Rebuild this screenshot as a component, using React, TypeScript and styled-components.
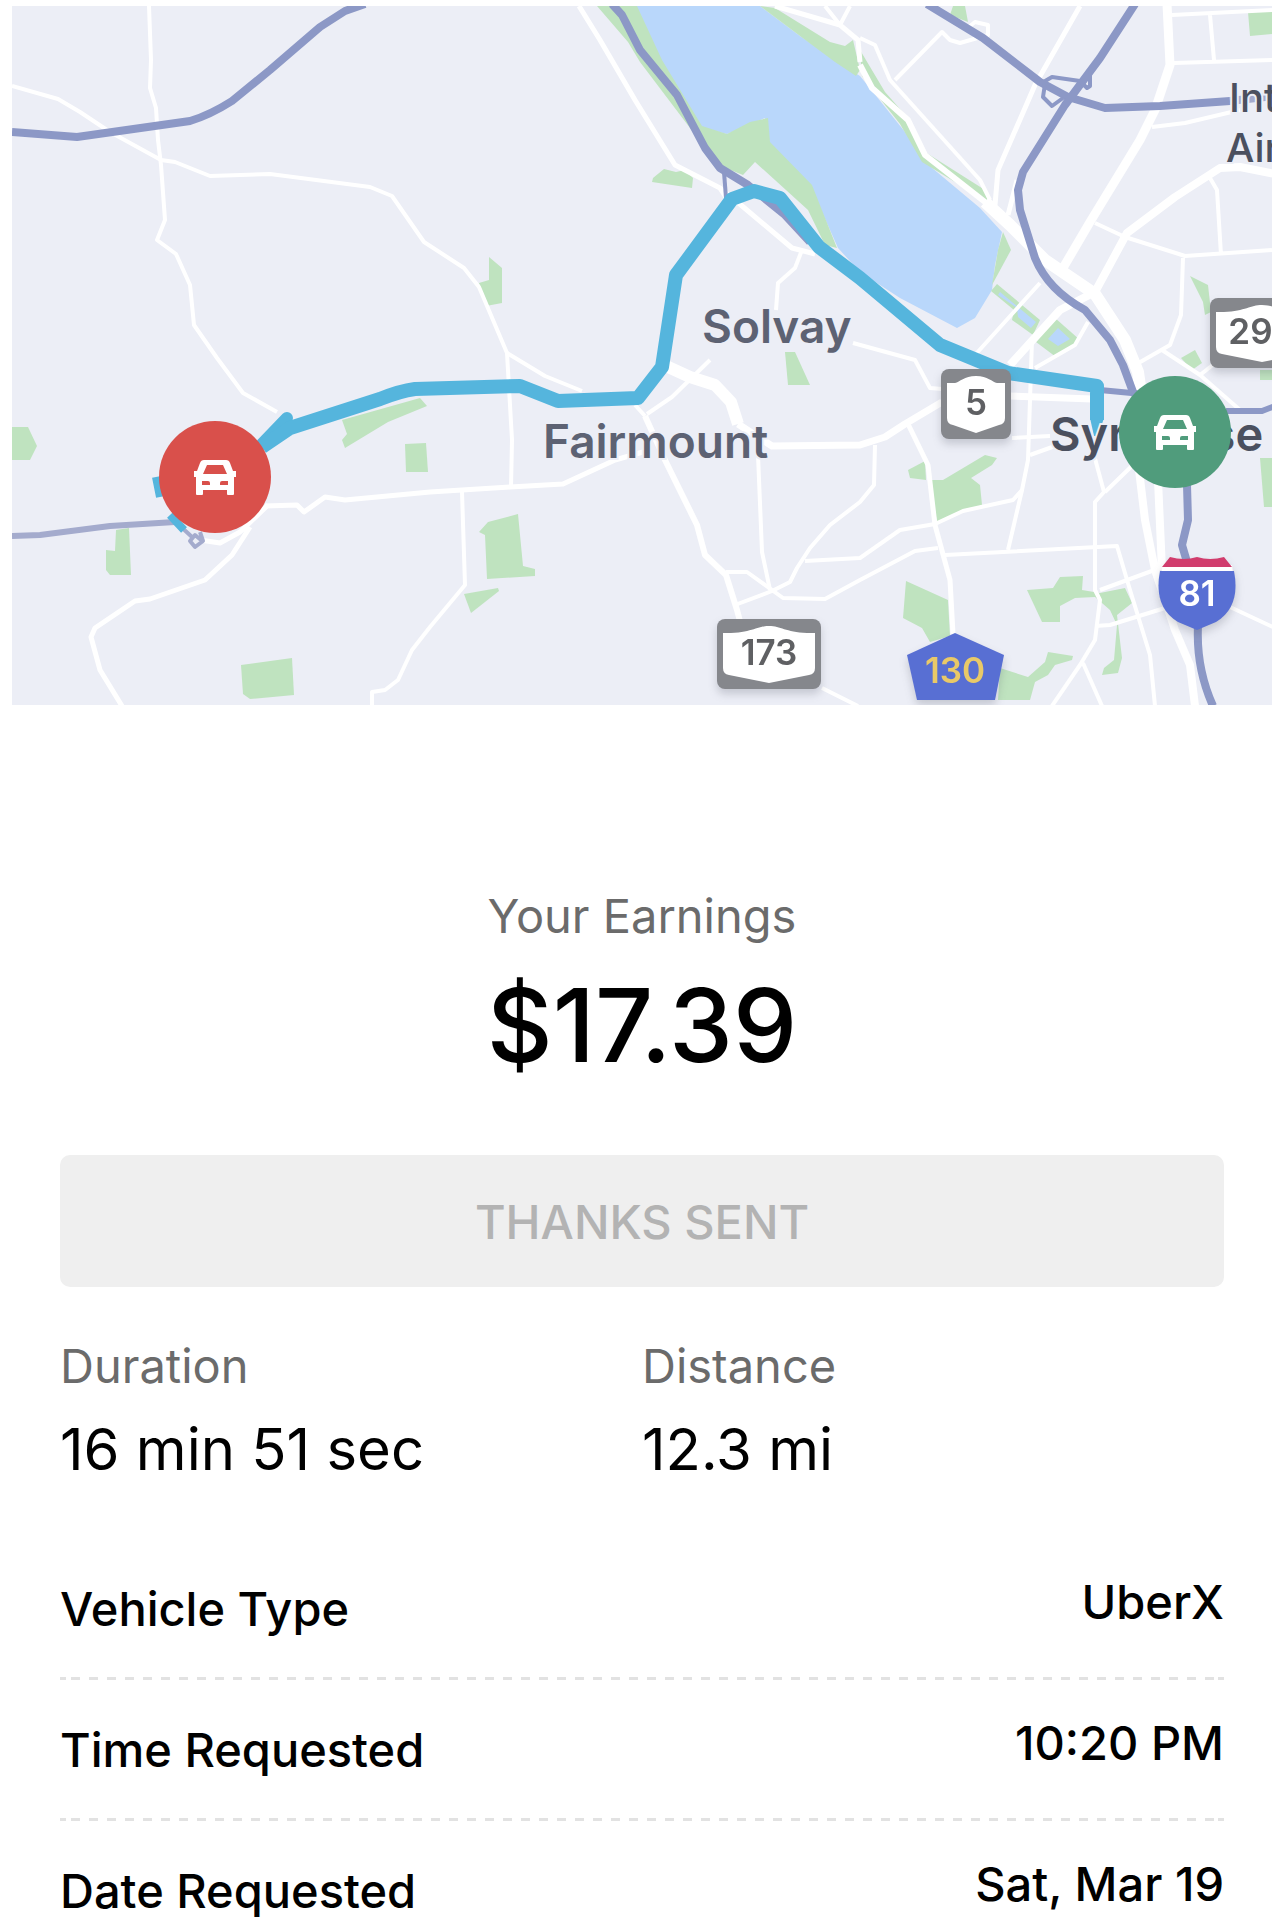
import React from "react";
import styled, { createGlobalStyle } from "styled-components";

const GlobalStyle = createGlobalStyle`
  * { box-sizing: border-box; }
  body {
    margin: 0;
    background: #fff;
    color: #000;
    font-family: Inter, "Liberation Sans", sans-serif;
  }
`;

const Page = styled.main`
  width: 100%;
  padding-top: 6px;
`;

const MapFrame = styled.figure`
  margin: 0 12px;
`;

const MapDrawing = styled.svg`
  display: block;
  width: 100%;
  height: auto;
  background: #eceef6;
`;

const Parks = styled.g`
  fill: #bfe3bf;
`;

const Lake = styled.path`
  fill: #b9d7fb;
`;

const Road = styled.path<{ $w?: number }>`
  fill: none;
  stroke: #fff;
  stroke-width: ${({ $w = 4 }) => $w};
  stroke-linejoin: round;
`;

const Highway = styled.path<{ $w?: number; $pale?: boolean }>`
  fill: none;
  stroke: ${({ $pale }) => ($pale ? "#a4abcd" : "#8c98c6")};
  stroke-width: ${({ $w = 8 }) => $w};
  stroke-linejoin: round;
`;

const Route = styled.path<{ $w?: number }>`
  fill: none;
  stroke: #55b5dd;
  stroke-width: ${({ $w = 14 }) => $w};
  stroke-linejoin: round;
`;

const PlaceName = styled.text<{ $size?: number; $dark?: boolean }>`
  font-size: ${({ $size = 46 }) => $size}px;
  font-weight: ${({ $size = 46 }) => ($size < 46 ? 500 : 600)};
  fill: ${({ $dark }) => ($dark ? "#4b505f" : "#5d6273")};
  stroke: #eceef6;
  stroke-width: 4;
  paint-order: stroke;
`;

const ShieldGroup = styled.g`
  filter: drop-shadow(0 5px 4px rgba(60, 64, 80, 0.22));
`;

const ShieldNumber = styled.text<{ $color?: string }>`
  font-size: 35px;
  font-weight: 600;
  text-anchor: middle;
  fill: ${({ $color = "#5f6063" }) => $color};
`;

const Details = styled.section`
  padding: 181px 60px 0;
`;

const Earnings = styled.div`
  display: flex;
  flex-direction: column;
  align-items: center;
  gap: 19px;
`;

const Caption = styled.div`
  font-size: 47px;
  line-height: 60px;
  font-weight: 400;
  color: #6b6b6b;
`;

const Amount = styled.div`
  font-size: 102px;
  line-height: 120px;
  font-weight: 500;
`;

const ThanksButton = styled.button`
  display: block;
  width: 100%;
  height: 132px;
  margin-top: 70px;
  padding: 0;
  border: 0;
  border-radius: 10px;
  background: #efefef;
  color: #b3b3b3;
  font-family: inherit;
  font-size: 47px;
  font-weight: 500;
`;

const Stats = styled.div`
  display: grid;
  grid-template-columns: 1fr 1fr;
  margin-top: 49px;
`;

const Stat = styled.div`
  display: flex;
  flex-direction: column;
  gap: 13px;
`;

const StatValue = styled.div`
  font-size: 58px;
  line-height: 80px;
  font-weight: 400;
`;

const Facts = styled.dl`
  margin: 50px 0 0;
`;

const Fact = styled.div`
  display: flex;
  justify-content: space-between;
  align-items: flex-start;
  padding: 35px 0 36px;
  font-size: 47px;
  font-weight: 500;

  &:not(:last-child) {
    background:
      linear-gradient(#e2e2e2, #e2e2e2) left bottom / 6px 3px no-repeat,
      linear-gradient(#e2e2e2, #e2e2e2) right bottom / 6px 3px no-repeat,
      linear-gradient(90deg, #e2e2e2 9px, transparent 9px) 11px 100% / 18px 3px repeat-x;
  }

  &:last-child {
    padding-bottom: 0;
  }
`;

const FactName = styled.dt`
  line-height: 70px;
`;

const FactValue = styled.dd`
  margin: 0;
  line-height: 56px;
`;

function RouteShield({ cx, top, width, label }: { cx: number; top: number; width: number; label: string }) {
  const l = cx - width / 2;
  const i = l + 6;
  const r = l + width - 6;
  return (
    <ShieldGroup>
      <rect x={l} y={top} width={width} height={70} rx={8} fill="#85878c" />
      <path
        fill="#fff"
        d={`M${i} ${top + 14} H${i + 8} C${cx - 16} ${top + 13} ${cx - 12} ${top + 7} ${cx} ${top + 7} C${cx + 12} ${top + 7} ${cx + 16} ${top + 13} ${r - 8} ${top + 14} H${r} V${top + 49} Q${r} ${top + 55} ${r - 6} ${top + 56} L${cx} ${top + 64} L${i + 6} ${top + 56} Q${i} ${top + 55} ${i} ${top + 49} Z`}
      />
      <ShieldNumber x={cx} y={top + 46}>{label}</ShieldNumber>
    </ShieldGroup>
  );
}

function CarPin({ x, y, color }: { x: number; y: number; color: string }) {
  return (
    <g transform={`translate(${x} ${y})`}>
      <circle r={56} fill={color} />
      <path
        fill="#fff"
        fillRule="evenodd"
        d="M-11 -17 H11 Q14 -17 15 -14 L18 -6 H21 V0 H19 V17 Q19 18 18 18 H13 Q12 18 12 17 V13 H-12 V17 Q-12 18 -13 18 H-18 Q-19 18 -19 17 V0 H-21 V-6 H-18 L-15 -14 Q-14 -17 -11 -17 Z M-8 -12 L-12 -3 H12 L8 -12 Z M-13 4 V8 H-5 V6 Q-5 4 -7 4 Z M13 4 V8 H5 V6 Q5 4 7 4 Z"
      />
    </g>
  );
}

const parks = [
  "M597 6 H637 L662 60 L702 126 L727 134 L750 122 L768 118 L770 142 L812 185 L837 248 L825 245 L808 210 L755 162 L743 175 L718 165 L640 62 L628 42 Z",
  "M760 6 L775 8 L830 42 L845 46 L853 40 L860 70 L856 76 L835 62 L800 36 Z",
  "M860 50 L885 92 L908 118 L925 152 L985 190 L988 202 L922 162 L900 124 L862 76 Z",
  "M953 6 H965 L968 22 L950 15 Z",
  "M1248 12 H1272 V34 L1250 36 Z",
  "M1003 232 L1011 250 L992 285 L998 250 Z",
  "M991 291 L997 284 L1040 320 L1033 335 L1012 320 L1014 310 Z",
  "M1055 318 L1080 340 L1056 357 L1036 342 Z",
  "M1190 276 L1208 285 L1211 312 L1205 315 L1203 302 Z",
  "M1181 358 L1195 350 L1202 363 L1192 370 Z",
  "M1260 370 H1272 V380 H1260 Z",
  "M1260 458 H1272 V507 H1264 Z",
  "M12 427 H28 L37 446 L30 460 H12 Z",
  "M342 420 L420 398 L427 406 L388 422 L345 448 L342 440 L347 434 Z",
  "M405 444 L426 443 L428 472 H406 Z",
  "M106 550 L115 551 L116 530 L129 528 L131 575 H110 L106 570 Z",
  "M241 665 L292 658 L294 695 L250 699 L243 694 Z",
  "M479 532 L488 522 L518 514 L523 566 L535 569 V576 L487 579 L485 535 Z",
  "M464 594 L498 588 L499 591 L471 613 Z",
  "M489 257 L502 268 V303 L486 306 L479 283 L489 280 Z",
  "M653 178 L664 169 L676 172 L685 170 L693 178 L692 188 L652 182 Z",
  "M785 352 H795 L810 385 H788 Z",
  "M908 470 L925 461 L926 480 L910 478 Z",
  "M930 480 L943 480 L985 455 L997 458 L992 465 L971 478 L980 485 L982 505 L937 522 Z",
  "M906 581 L948 600 L950 636 L930 642 L922 628 L903 618 Z",
  "M1027 590 L1053 588 L1060 577 L1083 576 L1082 590 L1100 593 L1125 588 L1132 603 L1117 615 L1122 658 L1118 673 L1102 675 L1104 668 L1114 660 L1117 625 L1110 610 L1095 597 L1075 598 L1060 606 V622 H1042 Z",
  "M1000 668 L1028 677 L1045 662 L1048 652 L1073 656 L1072 660 L1055 665 L1048 675 L1035 682 L1030 700 H998 Z",
];

const thinRoads = [
  "M149 6 L151 60 L150 88 L156 108 L158 140 L161 165 L165 220 L157 240 L176 254 L190 285 L194 325 L217 358 L243 393 L277 412",
  "M12 86 L58 99 L80 112 L110 132 L161 160 L175 162 L210 176 L270 174 L370 187 L392 196 L424 242 L464 268 L479 287 L507 353 L512 440 L511 487",
  "M507 353 L545 376 L582 391",
  "M802 250 L795 268 L778 283 L776 310",
  "M853 343 L915 360 L930 388 L942 389",
  "M635 405 L645 416 M647 414 L672 397 L710 360",
  "M758 455 L762 552 L770 590",
  "M726 572 H747 L783 598 L825 599 L860 580 L915 551 L938 548",
  "M735 605 L772 591 L790 582 L797 568 L810 548 L830 525 L860 502 L874 485 L875 445",
  "M805 561 L860 558 L900 530 L935 524",
  "M462 492 L465 585 L430 627 L412 650 L398 680 L385 690 L372 692 V705",
  "M822 688 L858 706",
  "M935 524 L963 511 L1013 500 L1022 490 L1028 460 L1032 340",
  "M1008 550 L1022 490",
  "M945 555 L1117 546 L1130 590 L1150 655 L1155 706",
  "M1090 440 L1104 492 L1095 502 V590 L1100 600 L1095 640 L1080 665 L1052 706 M1083 663 L1102 706",
  "M1100 590 L1160 568 M1095 626 L1110 625 L1165 608 M1230 607 L1275 628",
  "M1105 492 L1135 463 M1012 438 L1050 436 M1030 455 L1055 446",
  "M860 38 L875 45 L890 80 L980 180 L990 200",
  "M895 80 L942 32 L950 40 L960 43 L988 35 L988 25 L975 22 L965 30",
  "M1172 15 L1272 10 M1210 15 L1214 60 M1174 63 L1272 60",
  "M1152 127 L1185 123 L1240 110",
  "M1210 178 L1217 190 L1221 255 M1095 223 L1125 237 L1185 256 L1272 250",
  "M1183 258 L1181 315 L1170 345 L1135 365 M1162 350 L1200 375 L1214 364 M1200 375 L1240 410",
  "M1040 283 L975 355 M1088 322 L1075 345 L1035 368",
  "M825 6 L840 25 L850 6",
];

const facts: [string, string][] = [
  ["Vehicle Type", "UberX"],
  ["Time Requested", "10:20 PM"],
  ["Date Requested", "Sat, Mar 19"],
];

function TripMap() {
  return (
    <MapFrame>
      <MapDrawing viewBox="12 6 1260 699" role="img" aria-label="Trip route from Syracuse past Solvay and Fairmount">
        <Lake d="M633 6 L655 58 L675 88 L702 128 L727 134 L765 118 L770 145 L810 185 L838 248 L860 272 L900 298 L957 328 L975 318 L992 290 L995 265 L1002 232 L980 208 L925 162 L905 132 L873 92 L860 76 L835 60 L800 36 L760 6 Z" />
        <Parks>{parks.map((d) => <path key={d} d={d} />)}</Parks>
        <Lake d="M1000 292 L1036 322 L1031 328 L1018 317 L1017 308 L998 295 Z M1058 328 L1070 339 L1058 346 L1048 339 Z" />

        {thinRoads.map((d) => <Road key={d} d={d} />)}
        <Road $w={5} d="M579 6 L600 40 L635 100 L675 165 L720 188 L735 200 L792 248 L815 254 M720 188 L728 200" />
        <Road $w={5} d="M265 506 L297 505 L304 512 L325 497 L345 500 L430 492 L510 487 L563 484 L615 460 L650 450" />
        <Road $w={5} d="M200 540 L220 543 L240 532 L268 505 M250 527 L232 555 L205 580 L150 599 L135 601 L95 628 L91 637 L100 670 L122 706" />
        <Road $w={6} d="M645 416 L665 460 L697 525 L705 555 L726 575 L737 610 L745 640" />
        <Road $w={12} d="M666 366 L690 377 L715 385 L731 402 L738 424" />
        <Road $w={7} d="M738 424 L772 446 L860 445 L885 437 L905 424 L942 402 M1010 396 L1092 399" />
        <Road $w={5} d="M908 424 L928 465 L935 525 L950 580 L953 634" />
        <Road $w={8} d="M1139 470 L1145 520 L1155 570 L1175 630 L1190 665 L1195 706 M1158 480 L1162 570" />
        <Road $w={5} d="M775 6 L840 25 L858 40 L860 62" />
        <Road $w={6} d="M860 65 L872 88 L908 120 L925 155 L985 202 L1010 225" />
        <Road $w={5} d="M1080 6 L1035 85 L998 170 L995 205 M1017 180 L1008 215" />
        <Road $w={9} d="M1167 4 L1170 65 L1155 110 L1140 140 L1090 222 L1063 268" />
        <Road $w={8} d="M1275 174 L1240 167 L1220 168 L1175 197 L1127 233 L1095 292 L1060 310 L1010 365" />
        <Road $w={12} d="M985 202 L1010 225 L1045 260 L1095 294 L1125 340 L1138 372 L1142 400" />

        <Highway d="M12 132 L77 137 L190 121 Q210 115 232 101 L270 70 L320 27 L345 11 L365 4" />
        <Highway d="M612 4 L622 15 L640 50 L677 95 L705 148 L720 168 L748 185 L785 215 L810 242" />
        <Highway $w={4} d="M724 172 L726 198" />
        <Highway d="M927 4 L983 38 L1040 82 L1068 97 L1105 108 L1160 106 L1230 101" />
        <Highway $pale d="M1230 101 L1275 96" />
        <Highway d="M1135 4 L1100 58 L1065 105 L1023 172 L1018 190 L1020 210 L1035 258 Q1048 290 1085 310 L1110 340 L1123 365 L1133 392 L1142 402" />
        <Highway $w={4} d="M1040 84 L1052 77 L1080 81 L1087 88 L1090 86 L1090 73 M1045 84 L1043 97 L1052 106 L1063 98" />
        <Highway $w={6} d="M1100 390 L1142 394" />
        <Highway $w={6} d="M1226 411 H1262 L1275 406" />
        <Highway d="M1187 485 L1188 520 L1182 545 L1187 562 M1198 626 Q1196 668 1213 706" />
        <Highway $pale $w={6} d="M12 536 L40 535 L110 526 L175 522" />
        <Highway $pale $w={4} d="M178 524 L192 537 M200 532 L203 541 L195 547 L190 541 L195 535 L201 540" />

        <Route $w={12} d="M262 444 L287 418" strokeLinecap="round" />
        <Route d="M262 447 L290 428 L380 399 Q400 391 415 389 L520 386 L558 401 L638 398 L662 367 L676 275 L732 199 L754 191 L780 198 L819 247 L860 278 L940 345 L1008 373 L1097 386 L1097 420" />
        <path fill="#55b5dd" d="M1090 418 H1104 L1098 436 H1094 Z" />
        <Route $w={8} d="M156 477 L160 497 M170 515 L184 530" />

        <PlaceName x={702} y={343}>Solvay</PlaceName>
        <PlaceName x={543} y={458}>Fairmount</PlaceName>
        <PlaceName x={1050} y={451} $size={47} $dark>Syracuse</PlaceName>
        <PlaceName x={1229} y={112} $size={40} $dark>Int</PlaceName>
        <PlaceName x={1226} y={162} $size={40} $dark>Air</PlaceName>

        <RouteShield cx={976} top={369} width={70} label="5" />
        <RouteShield cx={769} top={619} width={104} label="173" />
        <RouteShield cx={1262} top={298} width={104} label="290" />
        <ShieldGroup>
          <path fill="#586fd3" d="M955 633 L1004 655 L995 700 H917 L907 655 Z" />
          <ShieldNumber x={955} y={683} $color="#e9c968">130</ShieldNumber>
        </ShieldGroup>
        <ShieldGroup>
          <path fill="#fff" d="M1163 565 H1232 L1233 573 H1161 Z" />
          <path fill="#d13c6d" d="M1162 567 L1170 557 Q1184 561 1197 557 Q1210 561 1224 557 L1232 567 Z" />
          <path fill="#586fd3" d="M1160 571 H1234 Q1241 607 1216 622 L1197 630 L1178 622 Q1153 607 1160 571 Z" />
          <ShieldNumber x={1197} y={606} $color="#fff">81</ShieldNumber>
        </ShieldGroup>

        <CarPin x={215} y={477} color="#d9504b" />
        <CarPin x={1175} y={432} color="#509c7c" />
      </MapDrawing>
    </MapFrame>
  );
}

export default function App() {
  return (
    <Page>
      <GlobalStyle />
      <TripMap />
      <Details>
        <Earnings>
          <Caption>Your Earnings</Caption>
          <Amount>$17.39</Amount>
        </Earnings>
        <ThanksButton type="button" disabled>THANKS SENT</ThanksButton>
        <Stats>
          <Stat>
            <Caption>Duration</Caption>
            <StatValue>16 min 51 sec</StatValue>
          </Stat>
          <Stat>
            <Caption>Distance</Caption>
            <StatValue>12.3 mi</StatValue>
          </Stat>
        </Stats>
        <Facts>
          {facts.map(([name, value]) => (
            <Fact key={name}>
              <FactName>{name}</FactName>
              <FactValue>{value}</FactValue>
            </Fact>
          ))}
        </Facts>
      </Details>
    </Page>
  );
}
